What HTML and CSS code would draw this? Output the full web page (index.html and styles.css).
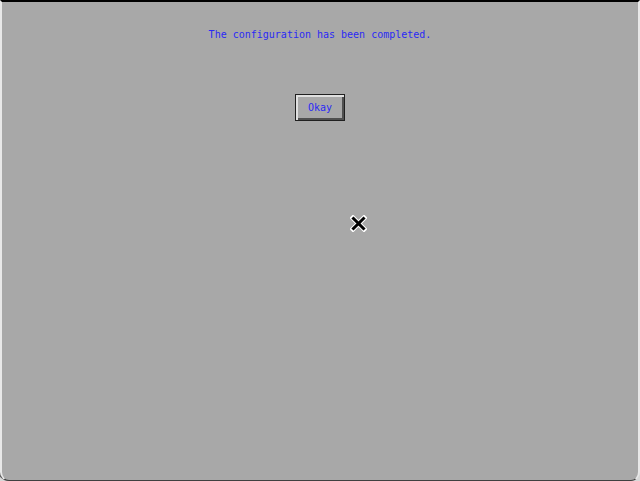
FILE: index.html
```html
<!DOCTYPE html>
<html lang="en">

<head>
    <meta charset="UTF-8">
    <meta name="viewport" content="width=device-width, initial-scale=1.0">
    <link rel="stylesheet" href="styles.css">
    <title>Configuration</title>
</head>

<body>
    <div class="screen">
        <p class="message">The configuration has been completed.</p>
        <button type="button" class="okButton">Okay</button>

        <!-- puntero del ratón (X de X11) -->
        <svg class="cursor" width="17" height="17" viewBox="0 0 17 17">
            <path d="M3 3 L14 14 M14 3 L3 14" stroke="#fff" stroke-width="5" stroke-linecap="square" />
            <path d="M3.5 3.5 L13.5 13.5 M13.5 3.5 L3.5 13.5" stroke="#000" stroke-width="3" stroke-linecap="square" />
        </svg>
    </div>
</body>

</html>
```

FILE: styles.css
```css
html,
body {
    margin: 0;
    padding: 0;
    background-color: #d8d8d8;
}

.screen {
    position: relative;
    box-sizing: border-box;
    width: 640px;
    height: 481px;
    background-color: #a8a8a8;
    border-top: 2px solid #000;
    border-left: 2px solid #e8e8e8;
    border-right: 2px solid #e8e8e8;
    border-bottom: 1px solid #404040;
    border-radius: 0 0 9px 9px;
    box-shadow: inset 0 0 0 0 transparent, -1px 0 0 #606060;
    display: flex;
    flex-direction: column;
    align-items: center;
    font-family: "DejaVu Sans Mono", "Liberation Mono", monospace;
}

.message {
    margin: 26px 0 0 0;
    font-size: 10px;
    line-height: 14px;
    color: #2a2af5;
}

.okButton {
    margin-top: 52px;
    width: 50px;
    height: 27px;
    padding: 0;
    font-family: inherit;
    font-size: 10px;
    color: #2a2af5;
    background: #a8a8a8;
    border: 1px solid #202020;
    box-shadow: inset 2px 2px 0 #e0e0e0, inset -2px -2px 0 #505050;
    cursor: pointer;
}

.cursor {
    position: absolute;
    left: 348px;
    top: 213px;
}
```
